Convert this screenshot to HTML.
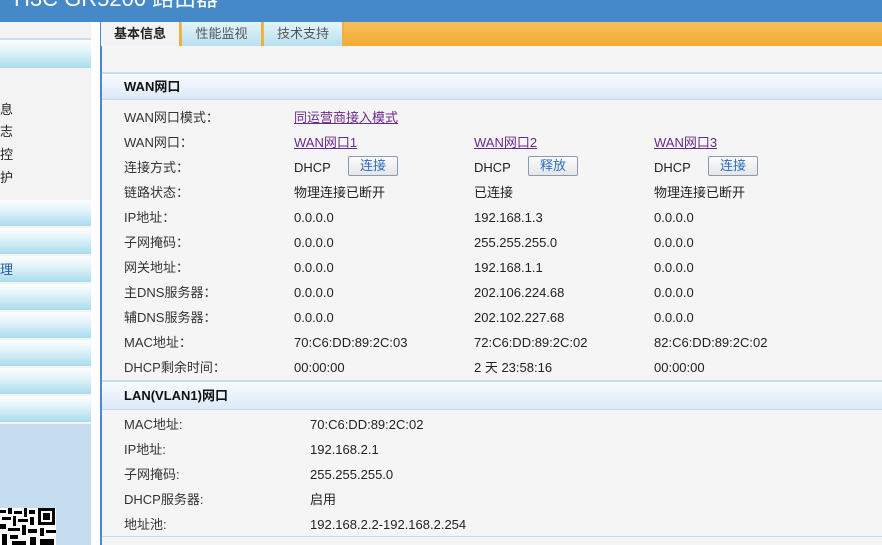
<!DOCTYPE html><html><head><meta charset="utf-8"><style>
*{margin:0;padding:0;box-sizing:border-box}
body{width:882px;height:545px;overflow:hidden;background:#fff;font-family:"Liberation Sans","Noto Sans CJK SC",sans-serif;font-size:13px;color:#222;position:relative}
.a{position:absolute;white-space:nowrap;line-height:16px}
.hdr{left:0;top:0;width:882px;height:22px;background:#4589c9;overflow:hidden}
.side{left:0;top:22px;width:91px;height:523px;background:#f3f3f3}
.bar{position:absolute;left:0;width:91px;height:26px;background:linear-gradient(#fdfeff,#e2f3f9 40%,#a8dcee)}
.tabbar{left:101px;top:22px;width:781px;height:24px;background:linear-gradient(#f7bf5a,#f4ab35)}
.tab{position:absolute;top:0;height:24px;line-height:24px;text-align:center;font-size:13px;color:#555;background:linear-gradient(#e4f4fb,#b8e0ef);border-right:2px solid #f0b040}
.content{left:102px;top:46px;width:780px;height:499px;background:#f5f5f5}
.sec{position:absolute;left:102px;width:780px;height:28px;border-top:2px solid #c6dcee;border-bottom:1px solid #c6dcee;background:linear-gradient(#f8fbff,#dde9f8);font-weight:bold;font-size:13px;padding-left:22px;line-height:26px;color:#111}
.l{color:#333}
a{color:#6a2a8a;text-decoration:underline}
.btn{position:absolute;width:50px;height:20px;border:1px solid #8a9ab0;border-radius:2px;background:linear-gradient(#fbfbfb,#e6e6e6);color:#2a6fc0;text-align:center;line-height:18px;font-size:13px}
</style></head><body>
<div class="a hdr"><span style="position:absolute;left:14px;top:-15px;color:#fff;font-size:22px;line-height:28px">H3C GR5200 路由器</span></div>
<div class="a side">
<div class="bar" style="top:16px;height:30px;border-top:2px solid #c9dff0"></div>
<div class="a" style="left:0;top:80px">息</div>
<div class="a" style="left:0;top:102px">志</div>
<div class="a" style="left:0;top:125px">控</div>
<div class="a" style="left:0;top:148px">护</div>
<div class="bar" style="top:178px"></div>
<div class="bar" style="top:206px"></div>
<div class="bar" style="top:234px"><span style="position:absolute;left:0;top:6px;color:#1a5aa8;line-height:16px">理</span></div>
<div class="bar" style="top:262px"></div>
<div class="bar" style="top:290px"></div>
<div class="bar" style="top:318px"></div>
<div class="bar" style="top:346px"></div>
<div class="bar" style="top:374px"></div>
<div style="position:absolute;left:0;top:402px;width:91px;height:121px;background:#c6dcef"></div>
<svg style="position:absolute;left:0;top:486px" width="56" height="37" viewBox="0 0 56 37"><rect width="56" height="37" fill="#fff"/><g fill="#000"><rect x="0" y="2" width="6" height="3"/><rect x="8" y="0" width="4" height="6"/><rect x="14" y="3" width="8" height="3"/><rect x="24" y="0" width="3" height="9"/><rect x="29" y="2" width="6" height="4"/><rect x="38" y="0" width="17" height="17"/><rect x="2" y="9" width="9" height="3"/><rect x="13" y="8" width="3" height="10"/><rect x="18" y="11" width="10" height="3"/><rect x="30" y="9" width="4" height="8"/><rect x="0" y="16" width="6" height="5"/><rect x="8" y="20" width="12" height="3"/><rect x="22" y="17" width="4" height="10"/><rect x="28" y="21" width="9" height="4"/><rect x="40" y="20" width="4" height="8"/><rect x="46" y="22" width="10" height="3"/><rect x="2" y="26" width="5" height="11"/><rect x="10" y="27" width="8" height="4"/><rect x="12" y="33" width="14" height="4"/><rect x="30" y="29" width="6" height="8"/><rect x="40" y="31" width="14" height="6"/></g><rect x="41" y="3" width="11" height="11" fill="#fff"/><rect x="43" y="5" width="7" height="7" fill="#000"/></svg>
</div>
<div class="a" style="left:100px;top:22px;width:2px;height:523px;background:#4a8ac8"></div>
<div class="a tabbar">
<div class="tab" style="left:0;width:80px;background:#f3f3f3;color:#222;font-weight:bold">基本信息</div>
<div class="tab" style="left:81px;width:81px">性能监视</div>
<div class="tab" style="left:163px;width:80px">技术支持</div>
</div>
<div class="a content"></div>
<div class="sec" style="top:72px">WAN网口</div>
<div class="a l" style="left:124px;top:110px">WAN网口模式：</div><div class="a" style="left:294px;top:110px"><a>同运营商接入模式</a></div>
<div class="a l" style="left:124px;top:135px">WAN网口：</div>
<div class="a" style="left:294px;top:135px"><a>WAN网口1</a></div><div class="a" style="left:474px;top:135px"><a>WAN网口2</a></div><div class="a" style="left:654px;top:135px"><a>WAN网口3</a></div>
<div class="a l" style="left:124px;top:160px">连接方式：</div>
<div class="a" style="left:294px;top:160px">DHCP</div><div class="btn" style="left:348px;top:156px">连接</div>
<div class="a" style="left:474px;top:160px">DHCP</div><div class="btn" style="left:528px;top:156px">释放</div>
<div class="a" style="left:654px;top:160px">DHCP</div><div class="btn" style="left:708px;top:156px">连接</div>
<div class="a l" style="left:124px;top:185px">链路状态：</div><div class="a" style="left:294px;top:185px">物理连接已断开</div><div class="a" style="left:474px;top:185px">已连接</div><div class="a" style="left:654px;top:185px">物理连接已断开</div>
<div class="a l" style="left:124px;top:210px">IP地址：</div><div class="a" style="left:294px;top:210px">0.0.0.0</div><div class="a" style="left:474px;top:210px">192.168.1.3</div><div class="a" style="left:654px;top:210px">0.0.0.0</div>
<div class="a l" style="left:124px;top:235px">子网掩码：</div><div class="a" style="left:294px;top:235px">0.0.0.0</div><div class="a" style="left:474px;top:235px">255.255.255.0</div><div class="a" style="left:654px;top:235px">0.0.0.0</div>
<div class="a l" style="left:124px;top:260px">网关地址：</div><div class="a" style="left:294px;top:260px">0.0.0.0</div><div class="a" style="left:474px;top:260px">192.168.1.1</div><div class="a" style="left:654px;top:260px">0.0.0.0</div>
<div class="a l" style="left:124px;top:285px">主DNS服务器：</div><div class="a" style="left:294px;top:285px">0.0.0.0</div><div class="a" style="left:474px;top:285px">202.106.224.68</div><div class="a" style="left:654px;top:285px">0.0.0.0</div>
<div class="a l" style="left:124px;top:310px">辅DNS服务器：</div><div class="a" style="left:294px;top:310px">0.0.0.0</div><div class="a" style="left:474px;top:310px">202.102.227.68</div><div class="a" style="left:654px;top:310px">0.0.0.0</div>
<div class="a l" style="left:124px;top:335px">MAC地址：</div><div class="a" style="left:294px;top:335px">70:C6:DD:89:2C:03</div><div class="a" style="left:474px;top:335px">72:C6:DD:89:2C:02</div><div class="a" style="left:654px;top:335px">82:C6:DD:89:2C:02</div>
<div class="a l" style="left:124px;top:360px">DHCP剩余时间：</div><div class="a" style="left:294px;top:360px">00:00:00</div><div class="a" style="left:474px;top:360px">2 天 23:58:16</div><div class="a" style="left:654px;top:360px">00:00:00</div>
<div class="sec" style="top:380px;height:30px;line-height:28px">LAN(VLAN1)网口</div>
<div class="a l" style="left:124px;top:417px">MAC地址:</div><div class="a" style="left:310px;top:417px">70:C6:DD:89:2C:02</div>
<div class="a l" style="left:124px;top:442px">IP地址:</div><div class="a" style="left:310px;top:442px">192.168.2.1</div>
<div class="a l" style="left:124px;top:467px">子网掩码:</div><div class="a" style="left:310px;top:467px">255.255.255.0</div>
<div class="a l" style="left:124px;top:492px">DHCP服务器:</div><div class="a" style="left:310px;top:492px">启用</div>
<div class="a l" style="left:124px;top:517px">地址池:</div><div class="a" style="left:310px;top:517px">192.168.2.2-192.168.2.254</div>
<div class="a" style="left:102px;top:536px;width:780px;height:1px;background:#c6dcee"></div>
</body></html>
